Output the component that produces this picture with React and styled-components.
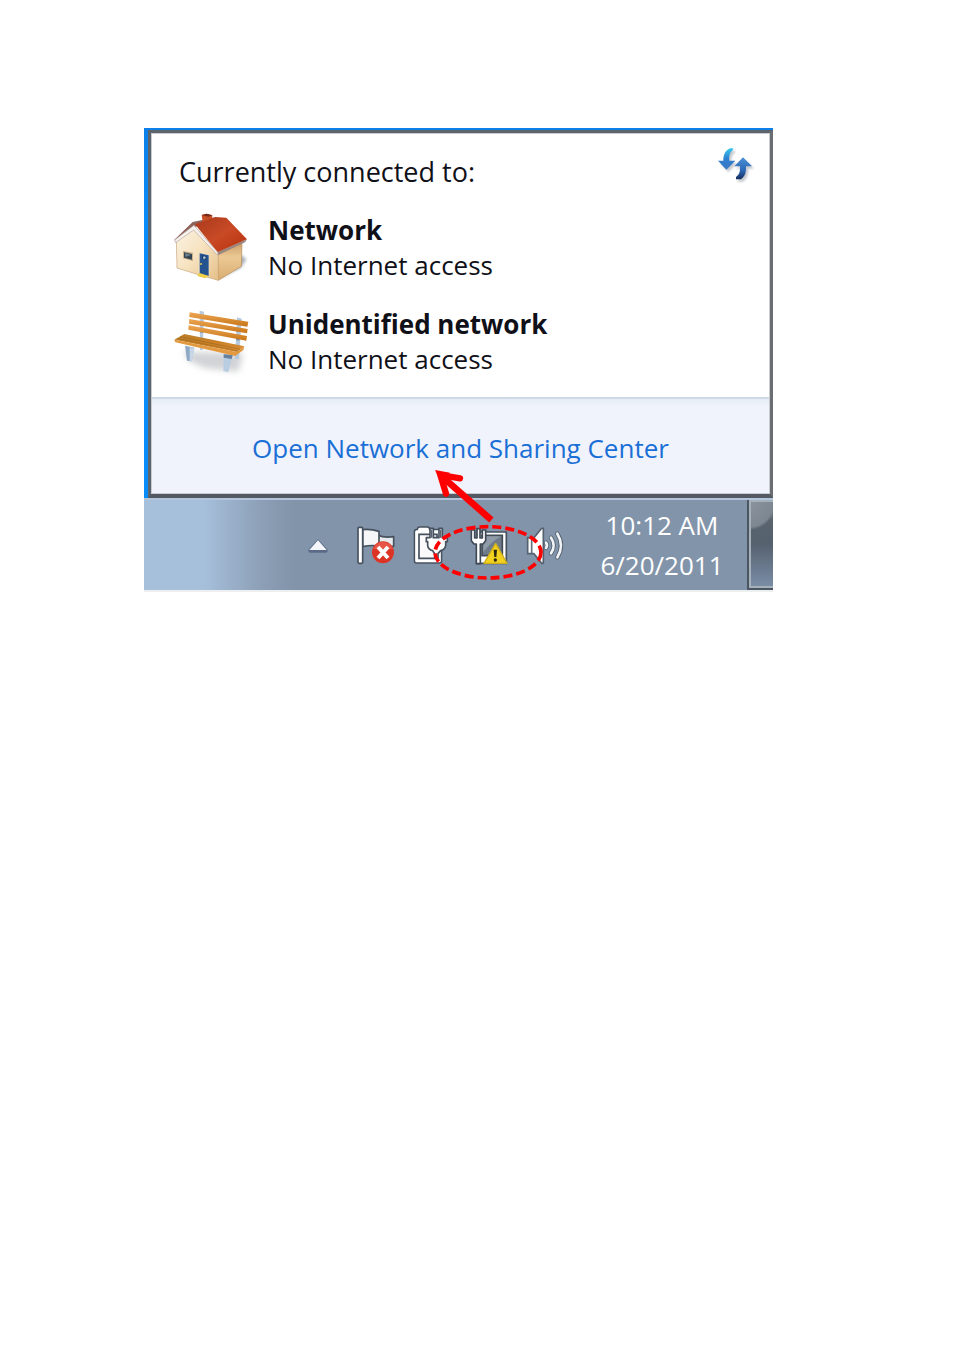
import React from "react";
import styled, { createGlobalStyle } from "styled-components";

const GlobalStyle = createGlobalStyle`
  * {
    box-sizing: border-box;
  }

  body {
    margin: 0;
    background: #ffffff;
    font-family: "Open Sans", "Noto Sans", sans-serif;
    font-size: 26px;
    line-height: 35px;
    color: #101018;
  }
`;

const Page = styled.main`
  padding: 128px 181px 40px 144px;
`;

const Desktop = styled.div`
  padding-top: 2px;
  background: linear-gradient(#0c7fe8, #0a8cf8 20%, #0a8cf8);
  border-bottom: 2px solid #eeeff1;
`;

const Flyout = styled.section`
  margin-left: 4px;
  border: 3px solid #5d646c;
  border-right-color: #6a6e72;
  border-bottom: 4px solid #535a63;
  background: #ffffff;
  box-shadow: inset 0 0 0 1px #c9ccce;
`;

const FlyoutHeader = styled.div`
  display: flex;
  justify-content: space-between;
  align-items: flex-start;
  height: 72px;
  padding: 12px 14px 0 28px;
`;

const Heading = styled.h1`
  margin: 9px 0 0;
  font-size: 27px;
  font-weight: 400;
`;

const IconButton = styled.button`
  display: flex;
  padding: 0;
  border: 0;
  background: none;
  cursor: pointer;
`;

const NetworkList = styled.ul`
  margin: 0;
  padding: 0 14px 4px;
  list-style: none;
`;

const NetworkItem = styled.li`
  display: flex;
  align-items: flex-start;
  gap: 13px;
  height: 94px;
`;

const NetworkText = styled.div`
  display: flex;
  flex-direction: column;
  padding-top: 8px;
`;

const FlyoutFooter = styled.div`
  display: flex;
  justify-content: center;
  margin: 0 1px 1px;
  padding: 32px 0 27px;
  border-top: 2px solid #cbd8e6;
  background: linear-gradient(#e6ecf5, #f0f3fb 8px);
`;

const FooterLink = styled.a`
  color: #1a6fd6;
  text-decoration: none;
`;

const Taskbar = styled.footer`
  display: flex;
  justify-content: flex-end;
  border-top: 2px solid #b3c5da;
  background: linear-gradient(
    90deg,
    #a6bfdb 0,
    #a6bfdb 60px,
    #8c9fb6 118px,
    #8294aa 150px
  );
`;

const TraySlot = styled.div`
  position: relative;
  display: flex;
`;

const Clock = styled.time`
  display: flex;
  flex: 0 0 172px;
  flex-direction: column;
  align-items: center;
  justify-content: center;
  padding-left: 2px;
  color: #ffffff;
  line-height: 40px;
`;

const ShowDesktop = styled.button`
  width: 26px;
  padding: 0;
  border: solid #4b5663;
  border-width: 0 0 2px 2px;
  box-shadow: inset 2px 2px 0 #a6b0bb, inset 0 -2px 0 #a6b0bb;
  background: radial-gradient(
      ellipse 28px 30px at 0 0,
      #8b949e 0,
      #7d8791 90%,
      transparent
    ),
    linear-gradient(#7f8891, #59646f 20px, #56616f 50%, #7b8fa8);
`;

const Callout = styled.svg`
  position: absolute;
  top: -50px;
  left: -61px;
  z-index: 1;
  pointer-events: none;
`;

const RefreshIcon = () => (
  <svg width="40" height="40" viewBox="48 75 120 120" aria-hidden="true">
    <defs>
      <linearGradient id="down" x1="0" y1="0" x2="0" y2="1">
        <stop offset="0" stopColor="#35c8ee" />
        <stop offset="0.5" stopColor="#2f7fd0" />
        <stop offset="1" stopColor="#3a78c4" />
      </linearGradient>
      <linearGradient id="up" x1="0" y1="0" x2="0" y2="1">
        <stop offset="0" stopColor="#4a90d8" />
        <stop offset="0.6" stopColor="#2b68b4" />
        <stop offset="1" stopColor="#142c5c" />
      </linearGradient>
      <filter id="soft" x="-30%" y="-30%" width="160%" height="160%">
        <feGaussianBlur stdDeviation="3" />
      </filter>
    </defs>
    <g fill="#c4c8ce" filter="url(#soft)" transform="translate(6 7)">
      <path d="M100 85H90C76 92 70 104 70 122H54L79 149L106 122H88C87 108 89 98 98 91Z" />
      <path d="M129 112L156 139H138C139 160 133 172 122 178H108V171C118 165 121 154 120 139H103Z" />
    </g>
    <path
      d="M100 85H90C76 92 70 104 70 122H54L79 149L106 122H88C87 108 89 98 98 91Z"
      fill="url(#down)"
    />
    <path
      d="M129 112L156 139H138C139 160 133 172 122 178H108V171C118 165 121 154 120 139H103Z"
      fill="url(#up)"
    />
  </svg>
);

const HouseIcon = () => (
  <svg width="90" height="90" viewBox="0 0 270 270" aria-hidden="true">
    <defs>
      <linearGradient id="roof" x1="0" y1="0" x2="1" y2="1">
        <stop offset="0" stopColor="#a83a1c" />
        <stop offset="0.5" stopColor="#c94a26" />
        <stop offset="1" stopColor="#b8300c" />
      </linearGradient>
      <linearGradient id="front" x1="0" y1="0" x2="1" y2="1">
        <stop offset="0" stopColor="#fbf4e6" />
        <stop offset="0.5" stopColor="#f6e2bf" />
        <stop offset="1" stopColor="#e5bf88" />
      </linearGradient>
      <linearGradient id="side" x1="0" y1="0" x2="0" y2="1">
        <stop offset="0" stopColor="#c79a62" />
        <stop offset="0.4" stopColor="#ecc994" />
        <stop offset="1" stopColor="#d8ac70" />
      </linearGradient>
      <filter id="houseBlur">
        <feGaussianBlur stdDeviation="4" />
      </filter>
    </defs>
    <path d="M160 222L228 188L244 162L228 150Z" fill="#a9b0b8" filter="url(#houseBlur)" />
    <path d="M157 142L231 110L229 184L160 226Z" fill="url(#side)" stroke="#b98b55" strokeWidth="2" />
    <path d="M34 102L88 66L160 140V226L100 209L36 189Z" fill="url(#front)" stroke="#c7a578" strokeWidth="2" />
    <path d="M28 104L83 51L152 37L92 66L34 111Z" fill="#8d625a" />
    <path d="M110 30L125 26L142 31V48L113 51Z" fill="#c75126" />
    <path d="M110 30L125 26L142 31L130 35Z" fill="#742b1c" />
    <path d="M90 58L151 36L184 38L246 103L158 142Z" fill="url(#roof)" />
    <path d="M157 142L246 103L240 112L160 150Z" fill="#9a8580" />
    <path d="M29 105L87 61L158 142L158 151L86 75L32 113Z" fill="#f5f1ee" stroke="#b9a6a0" strokeWidth="2" />
    <path d="M54 138L84 143V169L54 160Z" fill="#c9b28e" />
    <path d="M57 142L81 147V164L57 158Z" fill="#34434f" />
    <path d="M60 145L78 149L62 156Z" fill="#6f8592" />
    <path d="M100 141L133 148V217L100 208Z" fill="#f2dfc0" />
    <path d="M104 145L131 151V214L104 206Z" fill="#24538f" />
    <path d="M112 151L124 154V164L112 161Z" fill="#16355f" />
    <circle cx="118" cy="158" r="4" fill="#a9c4dc" />
    <circle cx="108" cy="177" r="3" fill="#e8c550" />
    <path d="M97 207L106 205L132 213L120 220L99 214Z" fill="#edcf48" />
  </svg>
);

const BenchIcon = () => (
  <svg width="90" height="90" viewBox="0 -3 270 270" aria-hidden="true">
    <defs>
      <linearGradient id="wood" x1="0" y1="0" x2="0" y2="1">
        <stop offset="0" stopColor="#eda654" />
        <stop offset="1" stopColor="#c87516" />
      </linearGradient>
      <linearGradient id="seat" x1="0" y1="0" x2="1" y2="1">
        <stop offset="0" stopColor="#b98028" />
        <stop offset="0.5" stopColor="#c97f25" />
        <stop offset="1" stopColor="#dc9038" />
      </linearGradient>
      <filter id="benchBlur" x="-30%" y="-30%" width="160%" height="160%">
        <feGaussianBlur stdDeviation="9" />
      </filter>
    </defs>
    <path d="M55 155L235 160L220 215L120 205L75 185Z" fill="#d2d3d6" filter="url(#benchBlur)" />
    <path d="M104 32L117 35L113 150H105Z" fill="#b5c9df" />
    <path d="M216 52L230 56L222 178L210 176Z" fill="#b5c9df" />
    <path d="M106 65H115V77H106ZM106 88H115V98H106ZM215 88H225V96H215ZM214 110H224V121H214Z" fill="#6c87a7" />
    <path d="M74 37L250 65L247 80L73 51Z" fill="url(#wood)" />
    <path d="M73 57L248 87L246 100L72 71Z" fill="url(#wood)" />
    <path d="M71 76L246 108L244 122L70 89Z" fill="url(#wood)" />
    <path d="M60 137L88 143L80 184L66 182Z" fill="#8fa8c5" />
    <path d="M74 142L88 145L81 184L74 184Z" fill="#c7d7e8" />
    <path d="M176 163L203 165L190 217L175 213Z" fill="#b9cde2" />
    <path d="M176 163L203 165L200 177L176 173Z" fill="#65819f" />
    <path d="M58 102L238 139L215 156L28 119Z" fill="url(#seat)" />
    <path d="M45 110L225 148M36 115L218 153" stroke="#9f681e" strokeWidth="2" fill="none" />
    <path d="M28 119L215 156L238 139L235 150L211 168L31 127Z" fill="#e2993f" />
  </svg>
);

const trayIcon = {
  width: 57,
  height: 90,
  "aria-hidden": true,
};

const ChevronIcon = () => (
  <svg {...trayIcon} viewBox="0 0 171 270">
    <path d="M84 118L113 149Q114 157 107 158H61Q54 157 55 149Z" fill="#5b6a88" />
    <path d="M84 121L110 150H58Z" fill="#f4f6f9" />
  </svg>
);

const FlagIcon = () => (
  <svg {...trayIcon} viewBox="171 0 171 270">
    <g stroke="#46515f" strokeWidth="5" strokeLinejoin="round">
      <path d="M264 106Q282 114 311 110V139H264Z" fill="#e7eaec" />
      <path d="M218 89Q241 86 267 94V138Q244 134 218 140Z" fill="#f5f6f7" />
      <rect x="204" y="82" width="14" height="108" rx="3" fill="#ffffff" />
    </g>
    <circle cx="279" cy="157" r="33" fill="#dc3526" />
    <path d="M250 147Q260 124 282 126Q302 128 309 147Z" fill="#ec6a5c" opacity="0.6" />
    <path d="M264 141L294 174M294 141L264 174" stroke="#ffffff" strokeWidth="12" />
  </svg>
);

const PowerIcon = () => (
  <svg {...trayIcon} viewBox="12 150 171 270">
    <path
      d="M50 245H59V238H82V245H118V332H50Z"
      fill="#f7f8f9"
      stroke="#46515f"
      strokeWidth="18"
      strokeLinejoin="round"
    />
    <path
      d="M50 245H59V238H82V245H118V332H50Z"
      fill="#f7f8f9"
      stroke="#ffffff"
      strokeWidth="9"
      strokeLinejoin="round"
    />
    <path d="M57 253H111V325H57Z" fill="#fafafa" stroke="#46515f" strokeWidth="5" />
    <path
      d="M90 235H100V263H117V235H127V263H142V275H137V287Q135 299 122 302L114 311V325H104V311L98 302Q85 299 83 287V275H79V263H90Z"
      fill="#ffffff"
      stroke="#46515f"
      strokeWidth="5"
      strokeLinejoin="round"
    />
    <path d="M93 239H97V263H93ZM120 239H124V263H120Z" fill="#59636f" />
  </svg>
);

const WiredIcon = () => (
  <svg {...trayIcon} viewBox="183 150 171 270">
    <path d="M238 246H319V340H231V320H238Z" fill="#ffffff" stroke="#46515f" strokeWidth="5" />
    <path d="M246 256H307V317H246Z" fill="#6f7b88" stroke="#424c57" strokeWidth="5" />
    <path d="M250 259L303 259Q274 274 250 307Z" fill="#8f9ba7" />
    <path
      d="M214 240H224V264H231V236H240V264H247V240H257V272L249 282H241V341H229V282H222L214 272Z"
      fill="#ffffff"
      stroke="#3f4955"
      strokeWidth="5"
      strokeLinejoin="round"
    />
    <path
      d="M287 280L321 340H252Z"
      fill="#f2d21e"
      stroke="#d0af1b"
      strokeWidth="4"
      strokeLinejoin="round"
    />
    <path d="M281 299H291L289 321H283Z" fill="#29280f" />
    <circle cx="286" cy="330" r="5" fill="#29280f" />
  </svg>
);

const VolumeIcon = () => (
  <svg {...trayIcon} viewBox="354 150 171 270">
    <path
      d="M383 263H402L425 235H430V340H425L402 311H383Z"
      fill="#ffffff"
      stroke="#55616f"
      strokeWidth="5"
      strokeLinejoin="round"
    />
    <path d="M395 264V310" stroke="#65717f" strokeWidth="5" />
    <g fill="none" strokeLinecap="round">
      <g stroke="#53606f" strokeWidth="13">
        <path d="M438 278Q444 286 438 294" />
        <path d="M453 263Q469 286 453 310" />
        <path d="M472 251Q494 286 472 322" />
      </g>
      <g stroke="#f0f3f6" strokeWidth="8">
        <path d="M438 278Q444 286 438 294" />
        <path d="M453 263Q469 286 453 310" />
        <path d="M472 251Q494 286 472 322" />
      </g>
    </g>
  </svg>
);

const NetworkCallout = () => (
  <Callout width="180" height="145" viewBox="0 0 540 435" aria-hidden="true">
    <g fill="none" stroke="#ff0000">
      <ellipse cx="264" cy="307" rx="159" ry="77" strokeWidth="11" strokeDasharray="27 12" />
      <path d="M274 210L120 74" strokeWidth="20" />
      <path d="M138 131L121 75L180 85" strokeWidth="19" strokeLinecap="round" />
    </g>
    <path d="M105 60L150 68L126 100Z" fill="#ff0000" />
  </Callout>
);

const networks = [
  { name: "Network", status: "No Internet access", Icon: HouseIcon },
  { name: "Unidentified network", status: "No Internet access", Icon: BenchIcon },
];

const App = () => {
  return (
    <>
      <GlobalStyle />
      <Page>
        <Desktop>
          <Flyout>
            <FlyoutHeader>
              <Heading>Currently connected to:</Heading>
              <IconButton type="button" aria-label="Refresh">
                <RefreshIcon />
              </IconButton>
            </FlyoutHeader>
            <NetworkList>
              {networks.map(({ name, status, Icon }) => (
                <NetworkItem key={name}>
                  <Icon />
                  <NetworkText>
                    <strong>{name}</strong>
                    <span>{status}</span>
                  </NetworkText>
                </NetworkItem>
              ))}
            </NetworkList>
            <FlyoutFooter>
              <FooterLink href="#sharing-center">
                Open Network and Sharing Center
              </FooterLink>
            </FlyoutFooter>
          </Flyout>
          <Taskbar>
            <IconButton type="button" aria-label="Show hidden icons">
              <ChevronIcon />
            </IconButton>
            <IconButton type="button" aria-label="Action Center">
              <FlagIcon />
            </IconButton>
            <IconButton type="button" aria-label="Power">
              <PowerIcon />
            </IconButton>
            <TraySlot>
              <IconButton type="button" aria-label="Network">
                <WiredIcon />
              </IconButton>
              <NetworkCallout />
            </TraySlot>
            <IconButton type="button" aria-label="Volume">
              <VolumeIcon />
            </IconButton>
            <Clock dateTime="2011-06-20T10:12">
              <span>10:12 AM</span>
              <span>6/20/2011</span>
            </Clock>
            <ShowDesktop type="button" aria-label="Show desktop" />
          </Taskbar>
        </Desktop>
      </Page>
    </>
  );
};

export default App;
